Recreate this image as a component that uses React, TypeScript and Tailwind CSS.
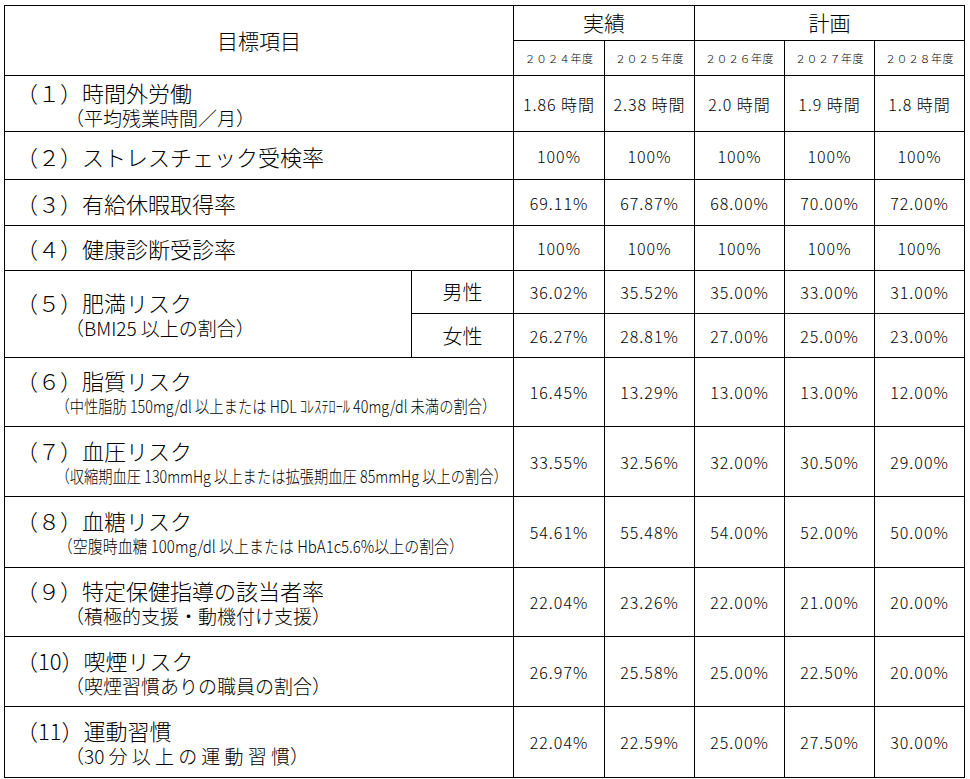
import React from "react";

type Row = {
  title: string;
  sub?: string;
  subClass?: string;
  values: string[];
  h: string;
};

const rows: Row[] = [
  { title: "（１）時間外労働", sub: "（平均残業時間／月）", values: ["1.86 時間", "2.38 時間", "2.0 時間", "1.9 時間", "1.8 時間"], h: "h-[56px]" },
  { title: "（２）ストレスチェック受検率", values: ["100%", "100%", "100%", "100%", "100%"], h: "h-[48px]" },
  { title: "（３）有給休暇取得率", values: ["69.11%", "67.87%", "68.00%", "70.00%", "72.00%"], h: "h-[46px]" },
  { title: "（４）健康診断受診率", values: ["100%", "100%", "100%", "100%", "100%"], h: "h-[45px]" },
];

const rows2: Row[] = [
  {
    title: "（６）脂質リスク",
    sub: "（中性脂肪 150mg/dl 以上または HDL ｺﾚｽﾃﾛｰﾙ 40mg/dl 未満の割合）",
    subClass: "text-[17px] scale-x-[0.84]",
    values: ["16.45%", "13.29%", "13.00%", "13.00%", "12.00%"],
    h: "h-[69px]",
  },
  {
    title: "（７）血圧リスク",
    sub: "（収縮期血圧 130mmHg 以上または拡張期血圧 85mmHg 以上の割合）",
    subClass: "text-[17px] scale-x-[0.84]",
    values: ["33.55%", "32.56%", "32.00%", "30.50%", "29.00%"],
    h: "h-[70px]",
  },
  {
    title: "（８）血糖リスク",
    sub: "（空腹時血糖 100mg/dl 以上または HbA1c5.6%以上の割合）",
    subClass: "text-[17px] scale-x-[0.88]",
    values: ["54.61%", "55.48%", "54.00%", "52.00%", "50.00%"],
    h: "h-[71px]",
  },
  {
    title: "（９）特定保健指導の該当者率",
    sub: "（積極的支援・動機付け支援）",
    values: ["22.04%", "23.26%", "22.00%", "21.00%", "20.00%"],
    h: "h-[69px]",
  },
  {
    title: "（10）喫煙リスク",
    sub: "（喫煙習慣ありの職員の割合）",
    values: ["26.97%", "25.58%", "25.00%", "22.50%", "20.00%"],
    h: "h-[70px]",
  },
  {
    title: "（11）運動習慣",
    sub: "（30 分 以 上 の 運 動 習 慣）",
    values: ["22.04%", "22.59%", "25.00%", "27.50%", "30.00%"],
    h: "h-[71px]",
  },
];

const cell = "border border-black p-0 align-middle";

function Label({ title, sub, subClass }: { title: string; sub?: string; subClass?: string }) {
  return (
    <div className="flex flex-col items-start">
      <div className="pl-[11px] text-[22px] leading-[28px] whitespace-nowrap">{title}</div>
      {sub && (
        <div
          className={
            "pl-[60px] leading-[24px] whitespace-nowrap origin-left " +
            (subClass ? subClass : "text-[19px]")
          }
        >
          {sub}
        </div>
      )}
    </div>
  );
}

function Values({ values }: { values: string[] }) {
  return (
    <>
      {values.map((v, i) => (
        <td key={i} className={cell + " text-center text-[16px] tracking-[1px]"}>
          {v}
        </td>
      ))}
    </>
  );
}

export default function App() {
  return (
    <div className="w-[970px] h-[779px] bg-white pt-[5px] pl-[4px] text-black font-light font-['Noto_Sans_CJK_JP',sans-serif]">
      <table className="table-fixed border-collapse w-[961px]">
        <colgroup>
          <col className="w-[407px]" />
          <col className="w-[102px]" />
          <col className="w-[91px]" />
          <col className="w-[90px]" />
          <col className="w-[90px]" />
          <col className="w-[90px]" />
          <col className="w-[90px]" />
        </colgroup>
        <tbody>
          <tr className="h-[35px]">
            <td colSpan={2} rowSpan={2} className={cell + " text-center text-[21px]"}>
              目標項目
            </td>
            <td colSpan={2} className={cell + " text-center text-[21px]"}>
              実績
            </td>
            <td colSpan={3} className={cell + " text-center text-[21px]"}>
              計画
            </td>
          </tr>
          <tr className="h-[35px]">
            {["２０２４年度", "２０２５年度", "２０２６年度", "２０２７年度", "２０２８年度"].map((y) => (
              <td key={y} className={cell + " text-center text-[11px] tracking-[0.5px]"}>
                {y}
              </td>
            ))}
          </tr>
          {rows.map((r) => (
            <tr key={r.title} className={r.h}>
              <td colSpan={2} className={cell}>
                <Label title={r.title} sub={r.sub} />
              </td>
              <Values values={r.values} />
            </tr>
          ))}
          <tr className="h-[43px]">
            <td rowSpan={2} className={cell}>
              <Label title="（５）肥満リスク" sub="（BMI25 以上の割合）" />
            </td>
            <td className={cell + " text-center text-[20px]"}>男性</td>
            <Values values={["36.02%", "35.52%", "35.00%", "33.00%", "31.00%"]} />
          </tr>
          <tr className="h-[44px]">
            <td className={cell + " text-center text-[20px]"}>女性</td>
            <Values values={["26.27%", "28.81%", "27.00%", "25.00%", "23.00%"]} />
          </tr>
          {rows2.map((r) => (
            <tr key={r.title} className={r.h}>
              <td colSpan={2} className={cell}>
                <Label title={r.title} sub={r.sub} subClass={r.subClass} />
              </td>
              <Values values={r.values} />
            </tr>
          ))}
        </tbody>
      </table>
    </div>
  );
}
